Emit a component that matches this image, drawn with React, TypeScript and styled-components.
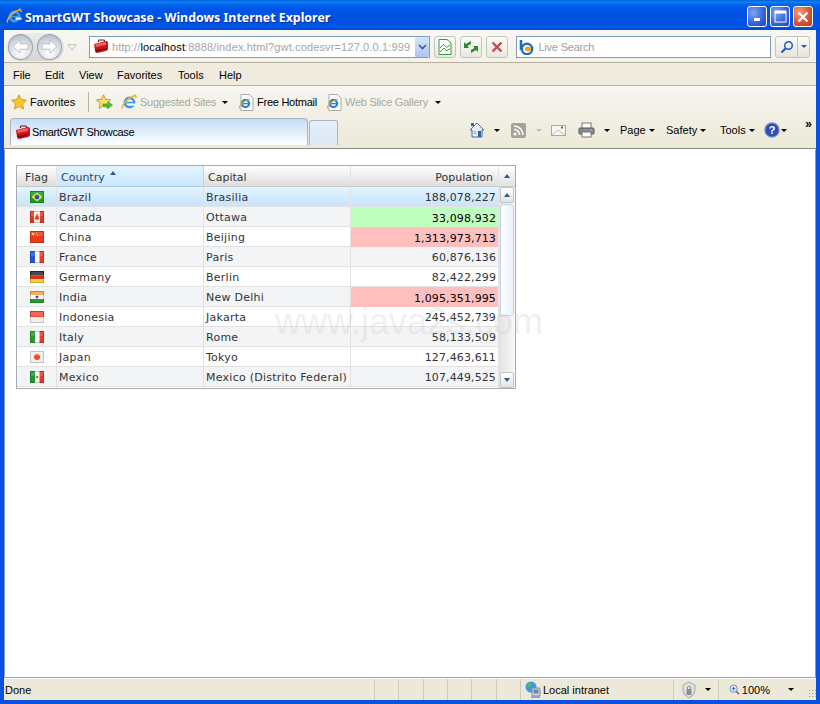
import React from 'react';
import styled, { createGlobalStyle } from 'styled-components';

const Global = createGlobalStyle`
	html, body { margin: 0; padding: 0; height: 704px; overflow: hidden; background: #fff; }
	* { box-sizing: border-box; }
`;

const Win = styled.div`
	position: relative;
	width: 820px;
	height: 704px;
	display: flex;
	flex-direction: column;
	background: #0a50e0;
	font-family: 'Liberation Sans', Arial, sans-serif;
	font-size: 11px;
	color: #000;
	overflow: hidden;
`;

const TitleBar = styled.div`
	height: 30px;
	flex: none;
	display: flex;
	align-items: center;
	padding: 5px 7px 0 6px;
	background: linear-gradient(#0a5bdc 0, #0a86f5 2px, #0468f0 4px, #0055e5 9px, #0050e0 22px, #0059ea 27px, #0047c8 30px);
`;

const TitleIcon = styled.div`
	display: flex;
	margin-top: -3px;
`;

const TitleText = styled.div`
	flex: 1;
	margin-left: 3px;
	color: #fff;
	font-family: 'Noto Sans', sans-serif;
	font-size: 12.4px;
	font-weight: 700;
	white-space: nowrap;
	text-shadow: 1px 1px 0 #0a2f9c;
`;

const WinBtn = styled.div<{ $close?: boolean }>`
	width: 20px;
	height: 21px;
	margin-left: 3px;
	margin-top: -2px;
	border: 1px solid #fff;
	border-radius: 3px;
	display: flex;
	align-items: center;
	justify-content: center;
	background: ${({ $close }) =>
		$close
			? 'radial-gradient(circle at 30% 30%, #f0a080, #d6502a 60%, #c03c14)'
			: 'radial-gradient(circle at 30% 30%, #7fa4f0, #2f62de 60%, #1f48c8)'};
`;

const Inner = styled.div`
	flex: 1;
	margin: 0 4px 4px;
	display: flex;
	flex-direction: column;
	min-height: 0;
	background: #ece9d8;
`;

const AddressRow = styled.div`
	height: 33px;
	flex: none;
	display: flex;
	align-items: center;
	padding: 1px 6px 0 3px;
	background: linear-gradient(#f8f7f2, #f3f1e8);
	border-bottom: 1px solid #b5b2a2;
`;

const NavPill = styled.div`
	width: 57px;
	height: 28px;
	border-radius: 14px;
	padding: 1px;
	display: flex;
	gap: 4px;
	background: linear-gradient(#ececec, #d4d4d4);
`;

const NavCircle = styled.div`
	width: 25px;
	height: 26px;
	border-radius: 50%;
	border: 1px solid #9aa3ad;
	display: flex;
	align-items: center;
	justify-content: center;
	background: radial-gradient(circle at 50% 75%, #fff, #d5dbe3 55%, #a8b0bb);
`;

const HistoryCaret = styled.svg`
	margin: 2px 0 0 3px;
	flex: none;
`;

const AddressBox = styled.div`
	width: 342px;
	height: 22px;
	margin-left: 12px;
	padding-left: 3px;
	display: flex;
	align-items: center;
	gap: 3px;
	background: #fff;
	border: 1px solid #7f9db9;
	font-size: 11px;
	color: #a5a5a5;
	white-space: nowrap;
	overflow: hidden;
`;

const Url = styled.div`
	flex: 1;
	overflow: hidden;
	letter-spacing: 0.14px;
	b { font-weight: 400; color: #000; }
`;

const Drop = styled.div`
	width: 15px;
	height: 20px;
	flex: none;
	display: flex;
	align-items: center;
	justify-content: center;
	border-left: 1px solid #fff;
	border-radius: 2px;
	background: linear-gradient(#d8e4fa, #aec4f2);
`;

const ToolBtn = styled.div`
	width: 22px;
	height: 22px;
	margin-left: 4px;
	flex: none;
	border: 1px solid #c3c3c3;
	border-radius: 3px;
	display: flex;
	align-items: center;
	justify-content: center;
	background: linear-gradient(#fbfbf8, #e9e8e0);
`;

const SearchBox = styled(AddressBox)`
	width: 255px;
	margin-left: 8px;
	padding-left: 2px;
	gap: 2px;
	color: #a0a0a0;
	letter-spacing: -0.2px;
`;

const SearchBtn = styled.div`
	width: 35px;
	height: 22px;
	margin-left: 4px;
	display: flex;
	border: 1px solid #c3c3c3;
	border-radius: 3px;
	background: linear-gradient(#fbfbf8, #e6e4da);
`;

const SearchPart = styled.div<{ $w: number }>`
	width: ${({ $w }) => $w}px;
	display: flex;
	align-items: center;
	justify-content: center;
	& + & { border-left: 1px solid #c3c3c3; }
`;

const MenuBar = styled.div`
	height: 23px;
	flex: none;
	display: flex;
	align-items: center;
	padding: 1px 0 0 9px;
	background: #efecdf;
	border-bottom: 1px solid #b5b2a2;
`;

const MenuItem = styled.div<{ $w: number }>`
	width: ${({ $w }) => $w}px;
	white-space: nowrap;
`;

const Chrome = styled.div`
	height: 63px;
	flex: none;
	display: flex;
	flex-direction: column;
	background: linear-gradient(#f7f6f0, #ece9d8);
	border-bottom: 1px solid #888a80;
`;

const FavRow = styled.div`
	height: 32px;
	flex: none;
	display: flex;
	align-items: center;
	padding-left: 7px;
`;

const FavItem = styled.div<{ $w: number; $off?: boolean; $tight?: boolean }>`
	width: ${({ $w }) => $w}px;
	flex: none;
	display: flex;
	align-items: center;
	gap: 3px;
	white-space: nowrap;
	letter-spacing: ${({ $tight }) => ($tight ? '-0.25px' : '0')};
	color: ${({ $off }) => ($off ? '#a8a8a0' : '#000')};
`;

const Sep = styled.div`
	width: 1px;
	height: 20px;
	margin-right: 7px;
	background: #b5b2a2;
`;

const Caret = styled.span<{ $off?: boolean }>`
	display: inline-block;
	width: 0;
	height: 0;
	flex: none;
	border-left: 3px solid transparent;
	border-right: 3px solid transparent;
	border-top: 3px solid ${({ $off }) => ($off ? '#bbb' : '#000')};
`;

const TabRow = styled.div`
	flex: 1;
	display: flex;
	align-items: flex-end;
	padding: 0 0 3px 6px;
`;

const Tab = styled.div`
	width: 298px;
	height: 27px;
	padding-left: 4px;
	display: flex;
	align-items: center;
	gap: 1px;
	border: 1px solid #a9b4c6;
	border-bottom: none;
	border-radius: 4px 4px 0 0;
	background: linear-gradient(#c3dcf7, #fff);
	white-space: nowrap;
	letter-spacing: -0.38px;
`;

const NewTab = styled.div`
	width: 29px;
	height: 25px;
	margin-left: 1px;
	border: 1px solid #a9b4c6;
	border-bottom: none;
	border-radius: 3px 3px 0 0;
	background: linear-gradient(#e6eff9, #dce8f6);
`;

const Commands = styled.div`
	flex: 1;
	height: 27px;
	padding: 0 0 3px 131px;
	display: flex;
	align-items: center;
	position: relative;
`;

const Cmd = styled.div<{ $w: number }>`
	width: ${({ $w }) => $w}px;
	flex: none;
	display: flex;
	align-items: center;
	gap: 3px;
	white-space: nowrap;
`;

const Chevrons = styled.div`
	position: absolute;
	right: 4px;
	top: 0;
	font-size: 12px;
	font-weight: 700;
	line-height: 12px;
`;

const Page = styled.div`
	flex: 1;
	min-height: 0;
	padding: 15px 0 0 11px;
	background: #fff;
	border-left: 1px solid #7f9db9;
	border-right: 1px solid #7f9db9;
	border-top: 1px solid #fff;
`;

const Grid = styled.div`
	width: 500px;
	height: 224px;
	border: 1px solid #a7abb4;
	display: flex;
	flex-direction: column;
	overflow: hidden;
	font-family: 'DejaVu Sans', Verdana, sans-serif;
	font-size: 11px;
	color: #333;
`;

const Head = styled.div`
	height: 21px;
	flex: none;
	display: grid;
	grid-template-columns: 40px 147px 147px 148px 16px;
`;

const HeadCell = styled.div<{ $active?: boolean; $right?: boolean; $center?: boolean }>`
	display: flex;
	align-items: center;
	justify-content: ${({ $right, $center }) => ($right ? 'flex-end' : $center ? 'center' : 'flex-start')};
	padding: ${({ $right, $center }) => ($center ? '2px 0 0' : $right ? '2px 5px 0 4px' : '2px 4px 0')};
	border-right: 1px solid ${({ $active }) => ($active ? '#b6d4f0' : '#e4e4e4')};
	border-bottom: 1px solid ${({ $active }) => ($active ? '#a9c9ea' : '#c9c9c9')};
	background: ${({ $active }) =>
		$active ? 'linear-gradient(#e3f5ff, #cbe6fc)' : 'linear-gradient(#fff, #dedede)'};
	color: ${({ $active }) => ($active ? '#2d4a6d' : '#333')};
`;

const SortUp = styled.span`
	width: 0;
	height: 0;
	margin: -9px 0 0 5px;
	border-left: 3.5px solid transparent;
	border-right: 3.5px solid transparent;
	border-bottom: 4px solid #2f5a92;
`;

const CornerBtn = styled.div`
	display: flex;
	align-items: center;
	justify-content: center;
	border-bottom: 1px solid #c9c9c9;
	background: linear-gradient(#fff, #e2e2e2);
`;

const Body = styled.div`
	flex: 1;
	min-height: 0;
	display: flex;
`;

const Rows = styled.div`
	width: 482px;
	flex: none;
	overflow: hidden;
`;

const RowLine = styled.div<{ $alt?: boolean; $sel?: boolean }>`
	height: 20px;
	display: grid;
	grid-template-columns: 40px 147px 147px 148px;
	background: ${({ $alt, $sel }) =>
		$sel ? 'linear-gradient(#e3f5ff, #c8e3fb)' : $alt ? '#f3f4f6' : '#fff'};
	border-bottom: 1px solid #e2e2e2;
`;

const Cell = styled.div<{ $right?: boolean; $tone?: 'high' | 'low' }>`
	display: flex;
	align-items: center;
	justify-content: ${({ $right }) => ($right ? 'flex-end' : 'flex-start')};
	padding: 2px 2px 0;
	margin-bottom: ${({ $tone }) => ($tone ? '-1px' : 0)};
	border-right: 1px solid #e2e2e2;
	white-space: nowrap;
	letter-spacing: ${({ $right }) => ($right ? '0.12px' : '0.25px')};
	color: ${({ $tone }) => ($tone ? '#000' : '#333')};
	background: ${({ $tone }) =>
		$tone === 'high' ? '#ffbfbf' : $tone === 'low' ? '#bfffbf' : 'transparent'};
`;

const FlagCell = styled(Cell)`
	justify-content: center;
	padding: 0;
`;

const Scroll = styled.div`
	flex: 1;
	display: flex;
	flex-direction: column;
	padding: 0 1px;
	background: linear-gradient(90deg, #e3e3e3, #f8f8f8);
`;

const ScrollBtn = styled.div`
	height: 16px;
	flex: none;
	display: flex;
	align-items: center;
	justify-content: center;
	border: 1px solid #c4c4c4;
	border-radius: 2px;
	background: linear-gradient(#fff, #e4e4e4);
`;

const Thumb = styled.div`
	height: 112px;
	flex: none;
	margin-top: 1px;
	border: 1px solid #c5d3e4;
	border-radius: 3px;
	background: linear-gradient(90deg, #fff, #e6f1fc);
`;

const ScrollGap = styled.div`
	flex: 1;
`;

const Arrow = styled.span<{ $down?: boolean }>`
	width: 0;
	height: 0;
	border-left: 3.5px solid transparent;
	border-right: 3.5px solid transparent;
	${({ $down }) => ($down ? 'border-top: 4px solid #2f5a92;' : 'border-bottom: 4px solid #2f5a92;')}
`;

const Watermark = styled.div`
	position: absolute;
	left: 275px;
	top: 301px;
	font-family: 'Liberation Sans', Arial, sans-serif;
	font-size: 36px;
	line-height: 42px;
	color: rgba(190, 190, 190, 0.22);
	white-space: nowrap;
	pointer-events: none;
`;

const Status = styled.div`
	height: 22px;
	flex: none;
	display: flex;
	align-items: center;
	background: #ece9d8;
	border-top: 1px solid #fff;
	box-shadow: 0 -1px 0 #a9a99f;
`;

const StatusCell = styled.div<{ $w: number; $first?: boolean; $pad?: number }>`
	width: ${({ $w }) => $w}px;
	height: 100%;
	flex: none;
	display: flex;
	align-items: center;
	gap: 2px;
	padding-left: ${({ $first, $pad }) => ($first ? 1 : ($pad ?? 3))}px;
	white-space: nowrap;
	& + & { border-left: 1px solid #cfccbc; }
`;

const Grip = styled.div`
	width: 9px;
	height: 9px;
	margin: 8px 0 0 14px;
	background-image: radial-gradient(#a8a596 40%, transparent 45%);
	background-size: 3px 3px;
`;

const Case = () => (
	<svg width="16" height="15" viewBox="0 0 16 15">
		<path d="M5 3 L6 1 H11 L12 3" fill="none" stroke="#7a1010" strokeWidth="1.2" />
		<path d="M1 5 L13 2 Q15 2 15 4 L15 10 Q15 11 13 12 L4 14 Q2 14 2 12 Z" fill="#cc1414" />
		<path d="M2 5 L13 3 L13 6 L3 8 Z" fill="#f06060" />
		<path d="M2 11 L14 9 L14 10 L4 13 Z" fill="#7d0b0b" />
	</svg>
);

const IeLogo = ({ size = 16 }: { size?: number }) => (
	<svg width={size} height={size} viewBox="0 0 16 16">
		<circle cx="8.5" cy="8.5" r="4.6" fill="none" stroke="#3f9cec" strokeWidth="2.6" />
		<rect x="4.5" y="7.8" width="8" height="1.6" fill="#3f9cec" />
		<rect x="9.5" y="9.5" width="6" height="2.2" fill="#fff" opacity="0.9" />
		<path d="M1.5 14.5 C0 11 8 3 14 1.5 C12 .5 15.5 1 15 4" fill="none" stroke="#eeb020" strokeWidth="1.5" />
	</svg>
);

const PageIe = () => (
	<svg width="16" height="17" viewBox="0 0 16 17">
		<path d="M3 .5 H11 L15 4 V16.5 H3 Z" fill="#fff" stroke="#a8a8a8" />
		<circle cx="7.5" cy="9.5" r="3.6" fill="none" stroke="#2a7fd8" strokeWidth="2.2" />
		<rect x="4.5" y="9" width="6" height="1.3" fill="#2a7fd8" />
		<path d="M1.5 14.5 C1 11 7 6 12 5" fill="none" stroke="#e8a820" strokeWidth="1.2" />
	</svg>
);

const Star = () => (
	<svg width="16" height="16" viewBox="0 0 16 16">
		<path d="M8 .8 L10.2 5.6 L15.4 6.2 L11.5 9.7 L12.6 15 L8 12.3 L3.4 15 L4.5 9.7 L.6 6.2 L5.8 5.6 Z" fill="#fbc52c" stroke="#c88a10" strokeWidth=".8" />
	</svg>
);

const StarAdd = () => (
	<svg width="17" height="16" viewBox="0 0 17 16">
		<path d="M7.5 .8 L9.6 5.3 L14.6 5.9 L10.9 9.2 L11.9 14.4 L7.5 11.8 L3.1 14.4 L4.1 9.2 L.4 5.9 L5.4 5.3 Z" fill="#fbdc6c" stroke="#b88a18" strokeWidth=".8" />
		<path d="M7 10 H12 V7.8 L16.5 11 L12 14.6 V12.4 H7 Z" fill="#4fbe3c" stroke="#2c8a22" strokeWidth=".5" />
	</svg>
);

const NavArrow = ({ flip }: { flip?: boolean }) => (
	<svg width="17" height="15" viewBox="0 0 17 15" style={flip ? { transform: 'scaleX(-1)' } : undefined}>
		<path d="M8 .8 L1 7.5 L8 14.2 V10.2 H16 V4.8 H8 Z" fill="#fff" stroke="#a8b0ba" strokeWidth=".8" />
	</svg>
);

const Compat = () => (
	<svg width="14" height="16" viewBox="0 0 14 16">
		<path d="M1 .5 H9 L13 4 V15.5 H1 Z" fill="#fff" stroke="#3a9a3a" />
		<path d="M2 9 L6 5.5 L8.5 8.5 L12 6 M2 13 L6 9 L8.5 12 L12 9.5" fill="none" stroke="#3a9a3a" />
	</svg>
);

const Refresh = () => (
	<svg width="16" height="14" viewBox="0 0 16 14">
		<path d="M8 1 L3 4 L1 2 L1 8 L6 8 L4.5 6 L8 4 Z" fill="#2c8a2c" />
		<path d="M8 13 L13 10 L15 12 L15 6 L10 6 L11.5 8 L8 10 Z" fill="#2c8a2c" />
	</svg>
);

const Stop = () => (
	<svg width="12" height="12" viewBox="0 0 12 12">
		<path d="M1.5 1.5 L10.5 10.5 M10.5 1.5 L1.5 10.5" stroke="#c8484a" strokeWidth="2.4" />
	</svg>
);

const Bing = () => (
	<svg width="17" height="16" viewBox="0 0 17 16">
		<path d="M2 1 V11" stroke="#1a6fc0" strokeWidth="2.6" />
		<circle cx="8" cy="10" r="5.2" fill="#fff" stroke="#1a6fc0" strokeWidth="2.4" />
		<ellipse cx="9" cy="10" rx="3" ry="2.4" fill="#f0a020" />
	</svg>
);

const Lens = () => (
	<svg width="14" height="14" viewBox="0 0 14 14">
		<circle cx="8.5" cy="5.5" r="3.8" fill="#eaf2ff" stroke="#2458c8" strokeWidth="1.5" />
		<path d="M5.5 8.5 L1.5 12.5" stroke="#2458c8" strokeWidth="2.2" />
	</svg>
);

const Home = () => (
	<svg width="16" height="16" viewBox="0 0 16 16">
		<path d="M8 1 L1 8 H3 V15 H13 V8 H15 Z" fill="#e8edf4" stroke="#4a6a9a" />
		<rect x="2" y="1" width="3" height="3" fill="#3a5fc0" />
		<rect x="9" y="9" width="3" height="6" fill="#3a5fa0" />
		<rect x="4.5" y="9" width="3" height="3" fill="#a8c4e8" />
	</svg>
);

const Rss = () => (
	<svg width="15" height="15" viewBox="0 0 15 15">
		<rect width="15" height="15" rx="2" fill="#a3a39b" />
		<circle cx="4" cy="11" r="1.6" fill="#fff" />
		<path d="M3 6.5 A5.5 5.5 0 0 1 8.5 12 M3 3 A9 9 0 0 1 12 12" fill="none" stroke="#fff" strokeWidth="1.6" />
	</svg>
);

const Mail = () => (
	<svg width="15" height="11" viewBox="0 0 15 11">
		<rect x=".5" y=".5" width="14" height="10" fill="#f4f4f0" stroke="#a8a8a8" />
		<path d="M1 10 L7 5 L14 10" fill="none" stroke="#c4c4c4" />
		<rect x="10" y="1.5" width="2" height="2" fill="#d43030" />
	</svg>
);

const Printer = () => (
	<svg width="17" height="16" viewBox="0 0 17 16">
		<rect x="4" y="1" width="9" height="6" fill="#fff" stroke="#777" />
		<rect x="1" y="6" width="15" height="6" rx="1" fill="#8c8c8c" stroke="#555" />
		<rect x="4" y="10" width="9" height="5" fill="#fff" stroke="#777" />
		<rect x="12" y="7.5" width="2" height="1" fill="#7fc0ff" />
	</svg>
);

const Help = () => (
	<svg width="16" height="16" viewBox="0 0 16 16">
		<circle cx="8" cy="8" r="7.2" fill="#2a50b8" stroke="#8a96b8" strokeWidth="1.2" />
		<text x="8" y="12" textAnchor="middle" fontSize="11" fontWeight="700" fill="#fff" fontFamily="Liberation Sans">?</text>
	</svg>
);

const Globe = () => (
	<svg width="17" height="18" viewBox="0 0 17 18">
		<circle cx="7" cy="6" r="5.5" fill="#3f9be0" />
		<path d="M3 3 Q7 1 7 5 Q3 7 3 3 M8 7 Q12 6 11 10 Q8 11 8 7" fill="#5cc04a" />
		<rect x="8" y="7" width="8" height="8" rx="1" fill="#cfd6df" stroke="#7d8792" />
		<rect x="9.5" y="8.5" width="5" height="4" fill="#5d87c4" />
		<rect x="7" y="15" width="9" height="2" fill="#9aa3ad" />
	</svg>
);

const Shield = () => (
	<svg width="16" height="18" viewBox="0 0 16 18">
		<path d="M8 1 L14 4 V10 Q14 14 8 17 Q2 14 2 10 V4 Z" fill="#dfe2e0" stroke="#a5a8a5" />
		<rect x="5.5" y="8" width="5" height="6" fill="#8b9093" />
		<path d="M6.5 8 V6 Q8 4 9.5 6 V8" fill="none" stroke="#8b9093" />
	</svg>
);

const ZoomIcon = () => (
	<svg width="13" height="13" viewBox="0 0 13 13">
		<circle cx="5.5" cy="5.5" r="4.4" fill="#dbe8fb" stroke="#5d80c0" />
		<path d="M3.5 5.5 H7.5 M5.5 3.5 V7.5" stroke="#2458c8" />
		<path d="M8.8 8.8 L12 12" stroke="#a06a2a" strokeWidth="2" />
	</svg>
);

const Flag = ({ children }: { children: React.ReactNode }) => (
	<svg width="14" height="12" viewBox="0 0 14 12">
		{children}
		<rect x=".5" y=".5" width="13" height="11" fill="none" stroke="rgba(0,0,0,0.18)" />
		<rect x="1" y="1" width="12" height="4" fill="rgba(255,255,255,0.15)" />
	</svg>
);

const flags: Record<string, React.ReactNode> = {
	Brazil: (
		<>
			<rect width="14" height="12" fill="#1f9a2c" />
			<path d="M7 1.5 L12.5 6 L7 10.5 L1.5 6 Z" fill="#f4e03c" />
			<circle cx="7" cy="6" r="2.4" fill="#2a55a8" />
		</>
	),
	Canada: (
		<>
			<rect width="14" height="12" fill="#fbe8e4" />
			<rect width="4" height="12" fill="#e23a24" />
			<rect x="10" width="4" height="12" fill="#e23a24" />
			<path d="M7 2.5 L8.7 6 L9.2 8.5 H4.8 L5.3 6 Z" fill="#e23a24" />
		</>
	),
	China: (
		<>
			<rect width="14" height="12" fill="#ec3a1c" />
			<circle cx="3" cy="3" r="1.3" fill="#f8c83c" />
			<rect x="6" y="1.5" width="1" height="1" fill="#f8c83c" />
			<rect x="7" y="4" width="1" height="1" fill="#f8c83c" />
		</>
	),
	France: (
		<>
			<rect width="14" height="12" fill="#fff" />
			<rect width="5" height="12" fill="#2456d8" />
			<rect x="9.5" width="4.5" height="12" fill="#ee3a28" />
		</>
	),
	Germany: (
		<>
			<rect width="14" height="4" fill="#2a2a2a" />
			<rect y="4" width="14" height="4" fill="#d8301c" />
			<rect y="8" width="14" height="4" fill="#fbd234" />
		</>
	),
	India: (
		<>
			<rect width="14" height="4" fill="#f8a040" />
			<rect y="4" width="14" height="4" fill="#f8f8f8" />
			<rect y="8" width="14" height="4" fill="#2a9a30" />
			<circle cx="7" cy="6" r="1.4" fill="#2a55a8" />
		</>
	),
	Indonesia: (
		<>
			<rect width="14" height="6" fill="#f44a34" />
			<rect y="6" width="14" height="6" fill="#eeeeee" />
		</>
	),
	Italy: (
		<>
			<rect width="14" height="12" fill="#fff" />
			<rect width="5" height="12" fill="#2a9a30" />
			<rect x="9.5" width="4.5" height="12" fill="#ea3a28" />
		</>
	),
	Japan: (
		<>
			<rect width="14" height="12" fill="#eeeeee" />
			<circle cx="7" cy="6" r="3" fill="#f4481c" />
		</>
	),
	Mexico: (
		<>
			<rect width="14" height="12" fill="#f8f4ee" />
			<rect width="5" height="12" fill="#22963a" />
			<rect x="9.5" width="4.5" height="12" fill="#e63a28" />
			<circle cx="7" cy="6" r="1.2" fill="#9a7a3a" />
		</>
	),
};

const countries: { name: string; capital: string; pop: string; tone?: 'high' | 'low' }[] = [
	{ name: 'Brazil', capital: 'Brasilia', pop: '188,078,227' },
	{ name: 'Canada', capital: 'Ottawa', pop: '33,098,932', tone: 'low' },
	{ name: 'China', capital: 'Beijing', pop: '1,313,973,713', tone: 'high' },
	{ name: 'France', capital: 'Paris', pop: '60,876,136' },
	{ name: 'Germany', capital: 'Berlin', pop: '82,422,299' },
	{ name: 'India', capital: 'New Delhi', pop: '1,095,351,995', tone: 'high' },
	{ name: 'Indonesia', capital: 'Jakarta', pop: '245,452,739' },
	{ name: 'Italy', capital: 'Rome', pop: '58,133,509' },
	{ name: 'Japan', capital: 'Tokyo', pop: '127,463,611' },
	{ name: 'Mexico', capital: 'Mexico (Distrito Federal)', pop: '107,449,525' },
];

export default function App() {
	return (
		<Win>
			<Global />
			<TitleBar>
				<TitleIcon><IeLogo /></TitleIcon>
				<TitleText>SmartGWT Showcase - Windows Internet Explorer</TitleText>
				<WinBtn>
					<svg width="9" height="9" viewBox="0 0 9 9"><rect x="1" y="6" width="6" height="3" fill="#fff" /></svg>
				</WinBtn>
				<WinBtn>
					<svg width="13" height="13" viewBox="0 0 13 13"><rect x="1" y="1" width="11" height="11" fill="none" stroke="#fff" /><rect x="1" y="1" width="11" height="2.5" fill="#fff" /></svg>
				</WinBtn>
				<WinBtn $close>
					<svg width="12" height="12" viewBox="0 0 12 12"><path d="M1.5 1.5 L10.5 10.5 M10.5 1.5 L1.5 10.5" stroke="#fff" strokeWidth="2.2" /></svg>
				</WinBtn>
			</TitleBar>
			<Inner>
				<AddressRow>
					<NavPill>
						<NavCircle><NavArrow /></NavCircle>
						<NavCircle><NavArrow flip /></NavCircle>
					</NavPill>
					<HistoryCaret width="10" height="7" viewBox="0 0 10 7">
						<path d="M.7 .7 H9.3 L5 6 Z" fill="#f4f4f0" stroke="#bdbdbd" />
					</HistoryCaret>
					<AddressBox>
						<Case />
						<Url>http://<b>localhost</b>:8888/index.html?gwt.codesvr=127.0.0.1:999</Url>
						<Drop>
							<svg width="9" height="7" viewBox="0 0 9 7"><path d="M1 2 L4.5 5.5 L8 2" fill="none" stroke="#3a5a9a" strokeWidth="1.6" /></svg>
						</Drop>
					</AddressBox>
					<ToolBtn><Compat /></ToolBtn>
					<ToolBtn><Refresh /></ToolBtn>
					<ToolBtn><Stop /></ToolBtn>
					<SearchBox><Bing />Live Search</SearchBox>
					<SearchBtn>
						<SearchPart $w={21}><Lens /></SearchPart>
						<SearchPart $w={12}><Caret style={{ borderTopColor: '#2458c8' }} /></SearchPart>
					</SearchBtn>
				</AddressRow>
				<MenuBar>
					<MenuItem $w={32}>File</MenuItem>
					<MenuItem $w={34}>Edit</MenuItem>
					<MenuItem $w={38}>View</MenuItem>
					<MenuItem $w={61}>Favorites</MenuItem>
					<MenuItem $w={41}>Tools</MenuItem>
					<MenuItem $w={30}>Help</MenuItem>
				</MenuBar>
				<Chrome>
					<FavRow>
						<FavItem $w={77}><Star />Favorites</FavItem>
						<Sep />
						<FavItem $w={25}><StarAdd /></FavItem>
						<FavItem $w={117} $off $tight><IeLogo />Suggested Sites<Caret style={{ marginLeft: 3 }} /></FavItem>
						<FavItem $w={88} $tight><PageIe />Free Hotmail</FavItem>
						<FavItem $w={120} $off $tight><PageIe />Web Slice Gallery<Caret style={{ marginLeft: 4 }} /></FavItem>
					</FavRow>
					<TabRow>
						<Tab><Case />SmartGWT Showcase</Tab>
						<NewTab />
						<Commands>
							<Cmd $w={42}><Home /><Caret style={{ marginLeft: 6 }} /></Cmd>
							<Cmd $w={40}><Rss /><Caret $off style={{ marginLeft: 7 }} /></Cmd>
							<Cmd $w={27}><Mail /></Cmd>
							<Cmd $w={42}><Printer /><Caret style={{ marginLeft: 6 }} /></Cmd>
							<Cmd $w={46}>Page<Caret /></Cmd>
							<Cmd $w={54}>Safety<Caret /></Cmd>
							<Cmd $w={44}>Tools<Caret /></Cmd>
							<Cmd $w={26}><Help /><Caret style={{ marginLeft: -2 }} /></Cmd>
							<Chevrons>»</Chevrons>
						</Commands>
					</TabRow>
				</Chrome>
				<Page>
					<Grid>
						<Head>
							<HeadCell $center>Flag</HeadCell>
							<HeadCell $active>Country<SortUp /></HeadCell>
							<HeadCell>Capital</HeadCell>
							<HeadCell $right>Population</HeadCell>
							<CornerBtn><Arrow /></CornerBtn>
						</Head>
						<Body>
							<Rows>
								{countries.map((c, i) => (
									<RowLine key={c.name} $alt={i % 2 === 1} $sel={i === 0}>
										<FlagCell><Flag>{flags[c.name]}</Flag></FlagCell>
										<Cell>{c.name}</Cell>
										<Cell>{c.capital}</Cell>
										<Cell $right $tone={c.tone}>{c.pop}</Cell>
									</RowLine>
								))}
								<RowLine>
									<Cell />
									<Cell />
									<Cell />
									<Cell />
								</RowLine>
							</Rows>
							<Scroll>
								<ScrollBtn><Arrow /></ScrollBtn>
								<Thumb />
								<ScrollGap />
								<ScrollBtn><Arrow $down /></ScrollBtn>
							</Scroll>
						</Body>
					</Grid>
				</Page>
				<Status>
					<StatusCell $w={370} $first>Done</StatusCell>
					<StatusCell $w={24} />
					<StatusCell $w={25} />
					<StatusCell $w={24} />
					<StatusCell $w={24} />
					<StatusCell $w={25} />
					<StatusCell $w={24} />
					<StatusCell $w={153}><Globe />Local intranet</StatusCell>
					<StatusCell $w={45} $pad={7}><Shield /><Caret style={{ marginLeft: 6 }} /></StatusCell>
					<StatusCell $w={76} $pad={10}>
						<ZoomIcon />100%<Caret style={{ marginLeft: 16 }} />
					</StatusCell>
					<Grip />
				</Status>
			</Inner>
			<Watermark>www.java2s.com</Watermark>
		</Win>
	);
}
